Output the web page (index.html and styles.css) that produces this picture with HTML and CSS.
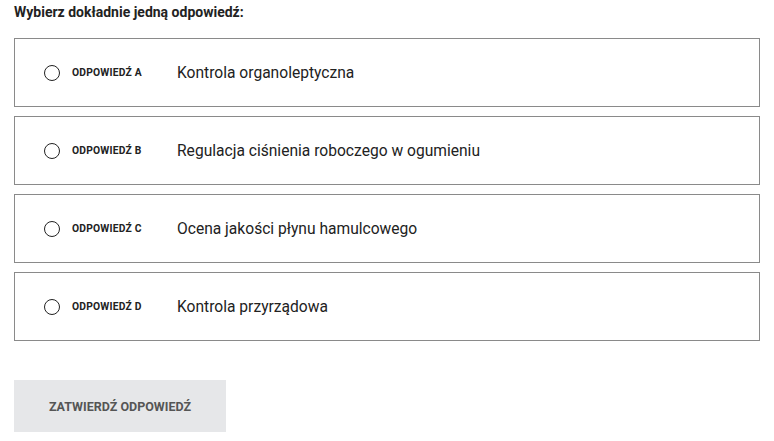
FILE: index.html
```html
<!DOCTYPE html>
<html lang="pl">
<head>
<meta charset="utf-8">
<link rel="stylesheet" href="styles.css">
</head>
<body>
<div class="quiz">
  <div class="prompt">Wybierz dokładnie jedną odpowiedź:</div>
  <div class="options">
    <label class="option"><span class="radio"></span><span class="tag">ODPOWIEDŹ A</span><span class="text">Kontrola organoleptyczna</span></label>
    <label class="option"><span class="radio"></span><span class="tag">ODPOWIEDŹ B</span><span class="text">Regulacja ciśnienia roboczego w ogumieniu</span></label>
    <label class="option"><span class="radio"></span><span class="tag">ODPOWIEDŹ C</span><span class="text">Ocena jakości płynu hamulcowego</span></label>
    <label class="option"><span class="radio"></span><span class="tag">ODPOWIEDŹ D</span><span class="text">Kontrola przyrządowa</span></label>
  </div>
  <button class="submit">ZATWIERDŹ ODPOWIEDŹ</button>
</div>
</body>
</html>
```
FILE: styles.css
```css
* { box-sizing: border-box; }
html, body { margin: 0; background: #fff; }
body { font-family: Roboto, "Noto Sans", sans-serif; color: #222; }
.quiz { padding: 3px 14px 0 14px; }
.prompt { font-size: 14px; font-weight: 700; line-height: 18px; color: #222; }
.options { display: flex; flex-direction: column; gap: 9px; margin-top: 17px; }
.option { display: flex; align-items: center; height: 69px; border: 1px solid #8a8a8a; padding-left: 29px; }
.radio { width: 16px; height: 16px; border: 1.5px solid #222; border-radius: 50%; flex: none; }
.tag { font-size: 10.3px; font-weight: 700; margin-left: 12px; width: 105px; letter-spacing: 0.2px; color: #222; }
.text { font-size: 15.6px; color: #222; }
.submit { display: block; margin-top: 39px; width: 212px; height: 52px; border: none; background: #e6e7e9; font-family: Roboto, sans-serif; font-size: 12.5px; font-weight: 700; color: #555; padding: 0; }
```
